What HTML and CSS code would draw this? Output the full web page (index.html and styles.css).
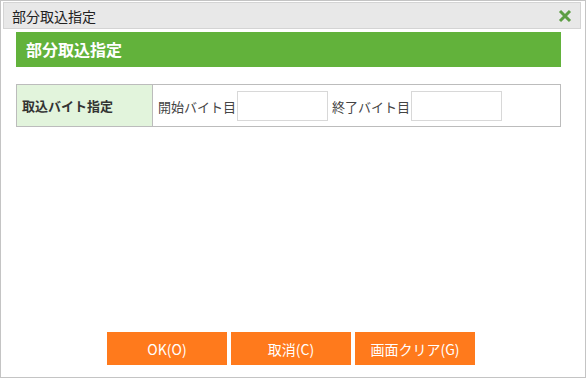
FILE: index.html
```html
<!DOCTYPE html>
<html lang="ja">
<head>
    <meta charset="UTF-8">
    <title>部分取込指定</title>
    <link rel="stylesheet" href="styles.css">
</head>
<body>

<div class="dialog">
    <div class="titlebar">
        <span class="title">部分取込指定</span>
        <span class="close">
            <svg width="14" height="14" viewBox="0 0 14 14"><path d="M2 2 L12 12 M12 2 L2 12" stroke="#5d9e43" stroke-width="3"/></svg>
        </span>
    </div>

    <div class="content">
        <div class="heading">部分取込指定</div>

        <table class="form-table">
            <tr>
                <th>取込バイト指定</th>
                <td>
                    <label>開始バイト目</label><input type="text" class="byte-input">
                    <label>終了バイト目</label><input type="text" class="byte-input">
                </td>
            </tr>
        </table>
    </div>

    <div class="buttons">
        <button>OK(O)</button>
        <button>取消(C)</button>
        <button>画面クリア(G)</button>
    </div>
</div>

</body>
</html>
```

FILE: styles.css
```css
body {
    margin: 0;
    font-family: "Noto Sans CJK JP", "Liberation Sans", sans-serif;
    background: #fff;
    color: #333;
}
.dialog {
    width: 584px;
    height: 376px;
    border: 1px solid #c4c4c4;
    display: flex;
    flex-direction: column;
}
.titlebar {
    margin: 1px 4px 0 2px;
    height: 25px;
    background: #e8e8e8;
    border: 1px solid #d4d4d4;
    display: flex;
    align-items: center;
    justify-content: space-between;
    padding: 0 8px 0 8px;
}
.title {
    font-size: 14px;
    color: #222;
}
.close svg {
    display: block;
}
.content {
    padding: 3px 24px 0 15px;
    flex: 1;
}
.heading {
    background: #62b23b;
    color: #fff;
    font-weight: bold;
    font-size: 16px;
    height: 35px;
    line-height: 35px;
    padding-left: 10px;
}
.form-table {
    margin-top: 17px;
    width: 100%;
    border-collapse: collapse;
    border: 1px solid #bcbcbc;
}
.form-table th {
    background: #e2f4dc;
    width: 125px;
    text-align: left;
    font-size: 13px;
    font-weight: bold;
    padding: 0 5px;
    height: 41px;
    border-right: 1px solid #bcbcbc;
    color: #333;
}
.form-table td {
    font-size: 13px;
    padding: 0 4px 0 5px;
    color: #444;
}
.form-table label {
    vertical-align: middle;
}
.byte-input {
    width: 89px;
    height: 28px;
    padding: 0;
    border: 1px solid #d8d8d8;
    margin: 0 1px;
    vertical-align: middle;
}
.buttons {
    display: flex;
    justify-content: center;
    gap: 4px;
    padding-bottom: 12px;
    padding-right: 4px;
}
button {
    background: #ff7a1c;
    color: #fff;
    border: none;
    width: 120px;
    height: 33px;
    font-size: 14px;
    font-family: "Noto Sans CJK JP", "Liberation Sans", sans-serif;
}
```
